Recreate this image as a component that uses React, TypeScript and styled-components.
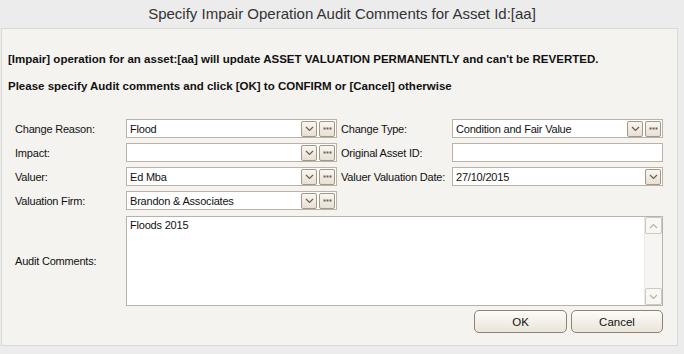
import React from 'react';
import styled, { createGlobalStyle } from 'styled-components';

// == styles =======================================================================================
const Global = createGlobalStyle`
  html, body {
    margin: 0;
    padding: 0;
    background: #ececec;
  }
`;

const Window = styled.div`
  width: 684px;
  height: 354px;
  display: flex;
  flex-direction: column;
  background: #ececec;
  font-family: 'Liberation Sans', Arial, sans-serif;
  color: #111;
  box-sizing: border-box;
`;

const TitleBar = styled.div`
  height: 28px;
  display: flex;
  align-items: center;
  justify-content: center;
  font-size: 15px;
  color: #333;
  padding-bottom: 1px;
  box-sizing: border-box;
`;

const Panel = styled.div`
  flex: 1;
  margin: 0 6px 8px 1px;
  border: 1px solid #d9d9d6;
  background: #f4f3ef;
  display: flex;
  flex-direction: column;
  padding: 0 14px 0 6px;
`;

const Message = styled.div<{ top: number }>`
  font-size: 11.5px;
  font-weight: bold;
  margin-top: ${ ( p ) => p.top }px;
  white-space: nowrap;
`;

const Form = styled.div`
  display: grid;
  grid-template-columns: 107px 211px 107px 211px;
  grid-auto-rows: 19px;
  column-gap: 4px;
  row-gap: 5px;
  margin: 27px 0 0 7px;
  font-size: 11px;
  letter-spacing: -0.2px;
`;

const Label = styled.div`
  display: flex;
  align-items: center;
  white-space: nowrap;
`;

const CommentsLabel = styled(Label)`
  grid-row: span 4;
`;

const Field = styled.div`
  display: flex;
  align-items: center;
  gap: 2px;
  background: #fff;
  border: 1px solid #bcb1a6;
  box-sizing: border-box;
  padding: 0 1px 0 3px;
`;

const FieldText = styled.span`
  flex: 1;
  white-space: nowrap;
`;

const SmallButton = styled.div`
  width: 16px;
  height: 16px;
  box-sizing: border-box;
  border: 1px solid #a69686;
  border-radius: 2px;
  background: linear-gradient(#f8f6f1, #e7e0d4);
  display: flex;
  align-items: center;
  justify-content: center;
`;

const Comments = styled.div`
  grid-column: 2 / span 3;
  grid-row: span 4;
  margin-top: 1px;
  display: flex;
  background: #fff;
  border: 1px solid #bcb1a6;
  box-sizing: border-box;
`;

const CommentsText = styled.div`
  flex: 1;
  padding: 2px 3px;
`;

const ScrollBar = styled.div`
  width: 17px;
  display: flex;
  flex-direction: column;
  justify-content: space-between;
  background: #f6f5f2;
  border-left: 1px solid #ece9e4;
`;

const ScrollButton = styled.div`
  height: 17px;
  box-sizing: border-box;
  border: 1px solid #cfc8bf;
  border-radius: 2px;
  background: #f8f7f4;
  display: flex;
  align-items: center;
  justify-content: center;
`;

const Actions = styled.div`
  display: flex;
  justify-content: flex-end;
  gap: 4px;
  margin-top: 4px;
`;

const ActionButton = styled.button<{ w: number }>`
  width: ${ ( p ) => p.w }px;
  height: 23px;
  box-sizing: border-box;
  border: 1px solid #8f8274;
  border-radius: 5px;
  background: linear-gradient(#fcfbf8, #ebe5da);
  font-family: 'Liberation Sans', Arial, sans-serif;
  font-size: 11.5px;
  color: #111;
  padding: 0;
`;

// == icons ========================================================================================
const Chevron: React.FC<{ up?: boolean; color?: string }> = ( { up, color = '#6b5d50' } ) => (
  <svg width="9" height="6" viewBox="0 0 9 6">
    <path
      d={ up ? 'M1 5 L4.5 1.5 L8 5' : 'M1 1 L4.5 4.5 L8 1' }
      fill="none"
      stroke={ color }
      strokeWidth="1.2"
    />
  </svg>
);

const Dots: React.FC = () => (
  <svg width="9" height="3" viewBox="0 0 9 3">
    <rect x="0.5" y="0.5" width="2" height="2" fill="#6b5d50" />
    <rect x="3.5" y="0.5" width="2" height="2" fill="#6b5d50" />
    <rect x="6.5" y="0.5" width="2" height="2" fill="#6b5d50" />
  </svg>
);

// == element ======================================================================================
interface ComboProps {
  value?: string;
  lookup?: boolean;
  dropdown?: boolean;
}

const Combo: React.FC<ComboProps> = ( { value = '', lookup = true, dropdown = true } ) => (
  <Field>
    <FieldText>{ value }</FieldText>
    { dropdown && <SmallButton><Chevron /></SmallButton> }
    { lookup && <SmallButton><Dots /></SmallButton> }
  </Field>
);

export default function App() {
  return <>
    <Global />
    <Window>
      <TitleBar>Specify Impair Operation Audit Comments for Asset Id:[aa]</TitleBar>
      <Panel>
        <Message top={ 24 }>
          [Impair] operation for an asset:[aa] will update ASSET VALUATION PERMANENTLY and can't be REVERTED.
        </Message>
        <Message top={ 15 }>
          Please specify Audit comments and click [OK] to CONFIRM or [Cancel] otherwise
        </Message>
        <Form>
          <Label>Change Reason:</Label>
          <Combo value="Flood" />
          <Label>Change Type:</Label>
          <Combo value="Condition and Fair Value" />

          <Label>Impact:</Label>
          <Combo />
          <Label>Original Asset ID:</Label>
          <Combo dropdown={ false } lookup={ false } />

          <Label>Valuer:</Label>
          <Combo value="Ed Mba" />
          <Label>Valuer Valuation Date:</Label>
          <Combo value="27/10/2015" lookup={ false } />

          <Label>Valuation Firm:</Label>
          <Combo value="Brandon &amp; Associates" />
          <div />
          <div />

          <CommentsLabel>Audit Comments:</CommentsLabel>
          <Comments>
            <CommentsText>Floods 2015</CommentsText>
            <ScrollBar>
              <ScrollButton><Chevron up color="#b9b2a8" /></ScrollButton>
              <ScrollButton><Chevron color="#b9b2a8" /></ScrollButton>
            </ScrollBar>
          </Comments>
        </Form>
        <Actions>
          <ActionButton w={ 93 }>OK</ActionButton>
          <ActionButton w={ 92 }>Cancel</ActionButton>
        </Actions>
      </Panel>
    </Window>
  </>;
}
